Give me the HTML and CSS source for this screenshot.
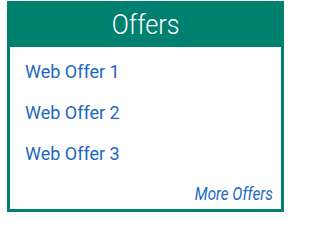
FILE: index.html
```html
<!DOCTYPE html>
<html>
<head>
<meta charset="utf-8">
<link rel="stylesheet" href="styles.css">
</head>
<body>
<div class="panel">
  <div class="panel-header"><span class="title">Offers</span></div>
  <ul class="offer-list">
    <li><a href="#">Web Offer 1</a></li>
    <li><a href="#">Web Offer 2</a></li>
    <li><a href="#">Web Offer 3</a></li>
  </ul>
  <div class="more"><a class="more-link" href="#">More Offers</a></div>
</div>
</body>
</html>
```

FILE: styles.css
```css
html, body {
  margin: 0;
  background: #ffffff;
}
body {
  padding: 1px 3px 0 7px;
  box-sizing: border-box;
  height: 215px;
  font-family: Roboto, "Liberation Sans", sans-serif;
}
.panel {
  width: 277px;
  height: 211px;
  box-sizing: border-box;
  border: 3px solid #00806f;
  background: #ffffff;
  display: flex;
  flex-direction: column;
}
.panel-header {
  background: #00806f;
  height: 43px;
  color: #ffffff;
  font-weight: 300;
  font-size: 28px;
  line-height: 41px;
  text-align: center;
}
.title {
  display: inline-block;
  transform: scaleX(0.9);
}
.offer-list {
  list-style: none;
  margin: 0;
  padding: 4px 0 0 15px;
}
.offer-list li {
  font-size: 18px;
  line-height: 41px;
}
a {
  color: #1b68c3;
  text-decoration: none;
}
.more {
  margin-top: 9px;
  padding-right: 8px;
  text-align: right;
  font-size: 18px;
  line-height: 21px;
  font-style: italic;
}
.more-link {
  display: inline-block;
  transform: scaleX(0.84);
  transform-origin: right center;
}
```
